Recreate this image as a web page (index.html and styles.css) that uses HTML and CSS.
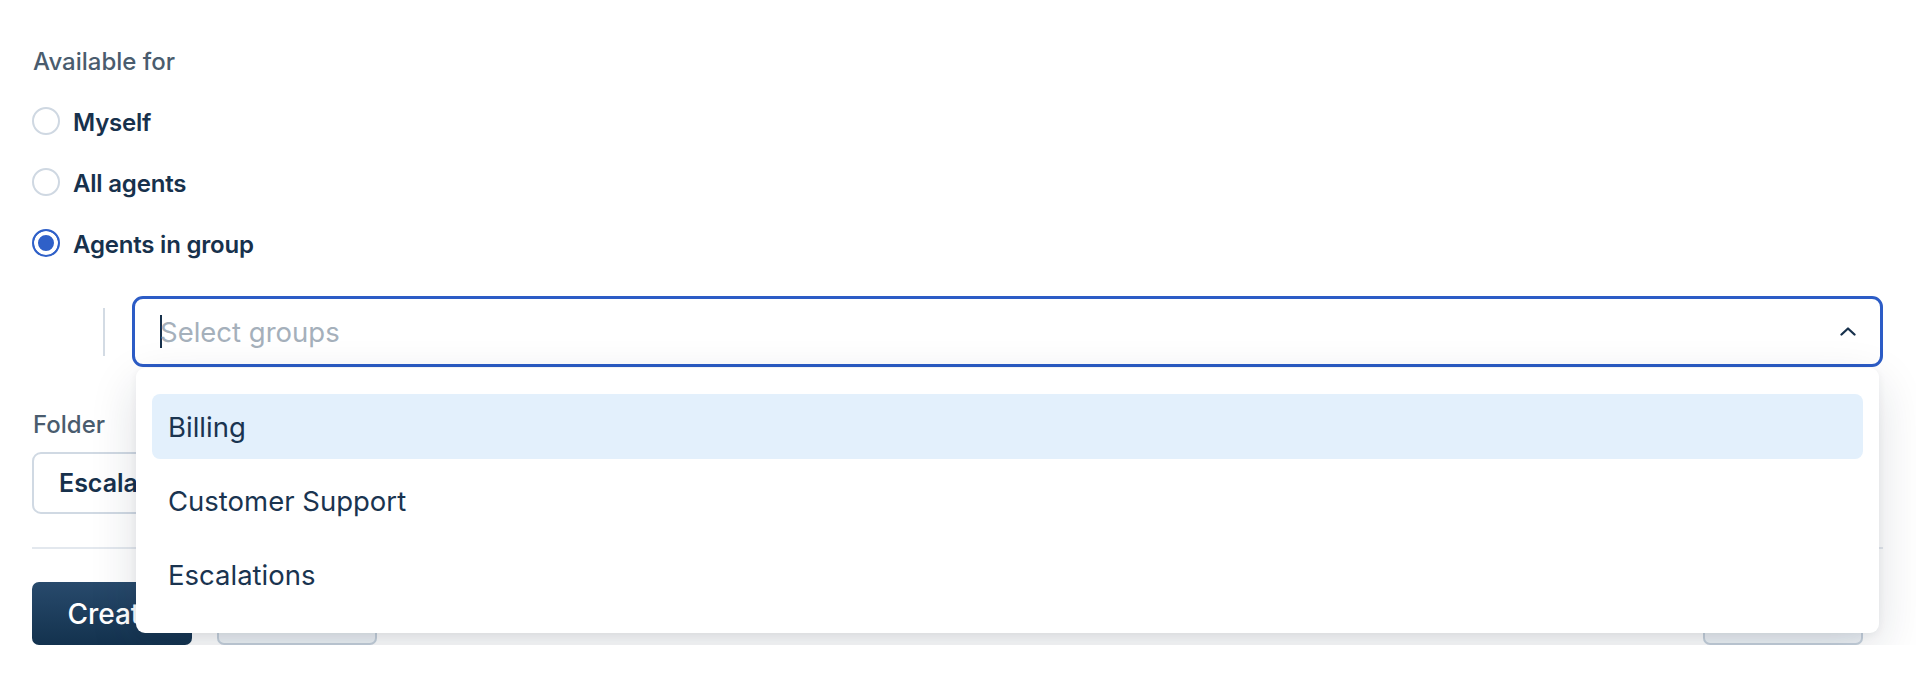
FILE: index.html
```html
<!DOCTYPE html>
<html lang="en">
<head>
<meta charset="utf-8">
<title>Macro settings</title>
<link rel="stylesheet" href="styles.css">
</head>
<body>
<div class="page">
  <section class="availability">
    <div class="field-label">Available for</div>
    <div class="radio-list">
      <label class="radio-row"><span class="radio"></span><span class="radio-text">Myself</span></label>
      <label class="radio-row"><span class="radio"></span><span class="radio-text">All agents</span></label>
      <label class="radio-row"><span class="radio radio--checked"></span><span class="radio-text">Agents in group</span></label>
    </div>
    <div class="group-picker">
      <span class="indent-rule"></span>
      <div class="select">
        <div class="select-control">
          <span class="caret"></span>
          <span class="placeholder">Select groups</span>
          <svg class="chevron" width="16" height="9" viewBox="0 0 16 9" aria-hidden="true">
            <path d="M1.5 7.5 L8 1.5 L14.5 7.5" fill="none" stroke="#17314c" stroke-width="2.3" stroke-linecap="round" stroke-linejoin="round"/>
          </svg>
        </div>
        <ul class="menu">
          <li class="menu-item is-active">Billing</li>
          <li class="menu-item">Customer Support</li>
          <li class="menu-item">Escalations</li>
        </ul>
      </div>
    </div>
  </section>
  <section class="folder">
    <div class="field-label">Folder</div>
    <div class="folder-input">Escalations</div>
  </section>
  <hr class="divider">
  <div class="actions">
    <button class="btn btn--primary">Create</button>
    <button class="btn btn--secondary">Cancel</button>
    <button class="btn btn--secondary btn--end">Preview</button>
  </div>
</div>
</body>
</html>
```
FILE: styles.css
```css
* { box-sizing: border-box; }

html, body {
  margin: 0;
  background: #ffffff;
}

body {
  font-family: Inter, "Noto Sans", "Liberation Sans", sans-serif;
  color: #17314c;
  overflow: hidden;
}

.page {
  padding: 47px 33px 0 32px;
}

.field-label {
  font-size: 24px;
  line-height: 30px;
  font-weight: 500;
  color: #4a5c6e;
  padding-left: 1px;
}

.radio-list {
  display: flex;
  flex-direction: column;
  gap: 33px;
  margin-top: 30px;
}

.radio-row {
  display: flex;
  align-items: center;
  gap: 13px;
  height: 28px;
}

.radio {
  width: 28px;
  height: 28px;
  border-radius: 50%;
  border: 2px solid #cfd8e2;
  background: #ffffff;
  flex: none;
}

.radio--checked {
  border-color: #2f60c8;
  background: #2f60c8;
  box-shadow: inset 0 0 0 4px #ffffff;
}

.radio-text {
  font-size: 24px;
  line-height: 28px;
  font-weight: 600;
  letter-spacing: -0.2px;
  padding-top: 3px;
  color: #17314c;
}

.group-picker {
  display: flex;
  align-items: center;
  gap: 27px;
  margin-top: 39px;
  padding-left: 71px;
}

.indent-rule {
  width: 2px;
  height: 48px;
  background: #d3dbe4;
  flex: none;
}

.select {
  position: relative;
  flex: 1;
}

.select-control {
  height: 71px;
  border: 3px solid #2c5cc6;
  border-radius: 11px;
  background: #ffffff;
  display: flex;
  align-items: center;
  padding: 0 24px 0 25px;
}

.caret {
  width: 2px;
  height: 33px;
  background: #17314c;
  flex: none;
}

.placeholder {
  margin-left: -2px;
  font-size: 27.5px;
  font-weight: 400;
  color: #a5b0bb;
}

.chevron {
  margin-left: auto;
  flex: none;
}

.menu {
  position: absolute;
  top: calc(100% + 1px);
  left: 4px;
  right: 4px;
  z-index: 10;
  margin: 0;
  padding: 26px 16px;
  list-style: none;
  background: #ffffff;
  border-radius: 9px;
  display: flex;
  flex-direction: column;
  gap: 9px;
  box-shadow: 0 16px 48px rgba(20, 35, 55, 0.14), 0 2px 8px rgba(20, 35, 55, 0.06);
}

.menu-item {
  height: 65px;
  display: flex;
  align-items: center;
  padding: 0 16px;
  border-radius: 8px;
  font-size: 27.5px;
  font-weight: 400;
  color: #1a3450;
}

.menu-item.is-active {
  background: #e3f0fc;
}

.folder {
  margin-top: 43px;
}

.folder-input {
  margin-top: 12px;
  width: 60%;
  height: 62px;
  border: 2px solid #d0d9e3;
  border-radius: 9px;
  display: flex;
  align-items: center;
  padding-left: 25px;
  font-size: 25px;
  font-weight: 600;
  color: #17314c;
}

.divider {
  margin: 33px 0 0;
  height: 2px;
  border: none;
  background: #e3e8ee;
}

.actions {
  display: flex;
  gap: 25px;
  margin-top: 33px;
}

.btn {
  width: 160px;
  height: 63px;
  border-radius: 7px;
  font-family: inherit;
  font-size: 28px;
  font-weight: 500;
}

.btn--primary {
  border: none;
  color: #ffffff;
  background: linear-gradient(#284a6c, #13324e);
}

.btn--secondary {
  border: 2px solid #c6d1dc;
  background: #eef2f6;
  color: #17314c;
}

.btn--end {
  margin-left: auto;
  margin-right: 20px;
}
```
